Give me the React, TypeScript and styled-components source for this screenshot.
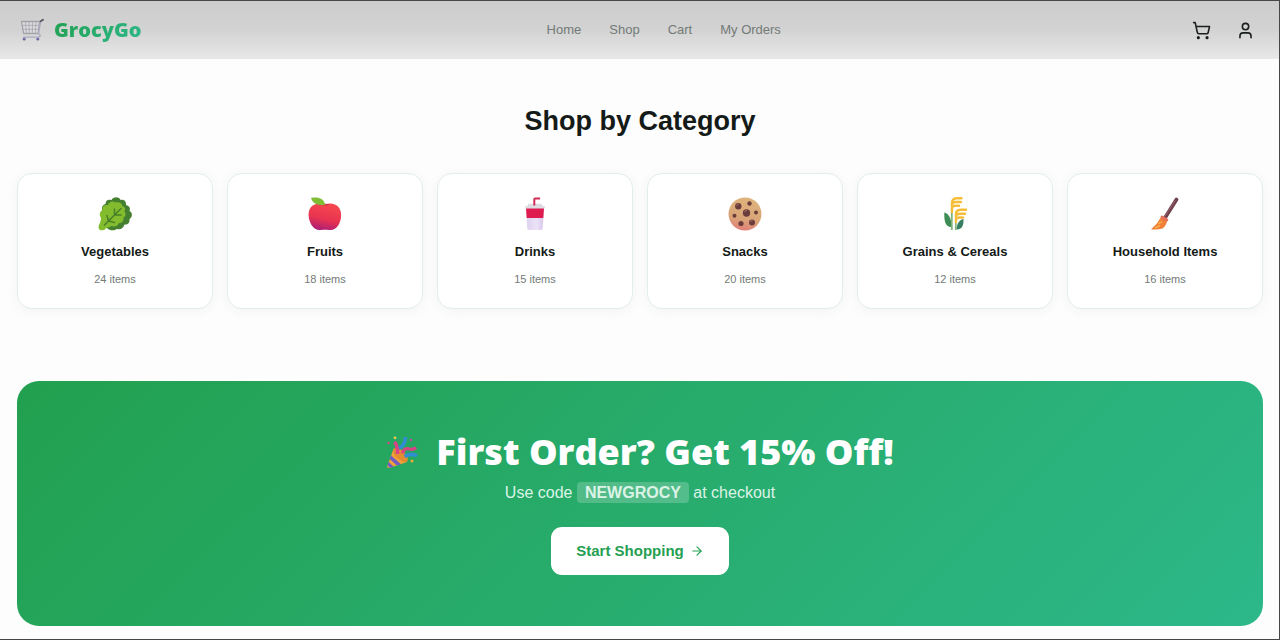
import React from "react";
import styled, { createGlobalStyle } from "styled-components";
import { ArrowRight, ShoppingCart, User } from "lucide-react";

const sans = '"Liberation Sans", Arial, sans-serif';
const display = '"Open Sans", "Liberation Sans", sans-serif';

const GlobalStyle = createGlobalStyle`
  *, *::before, *::after { box-sizing: border-box; }
  body {
    margin: 0;
    background: #fdfdfd;
    color: #141a17;
    font-family: ${sans};
  }
  h1, h2, h3, p { margin: 0; }
`;

const Page = styled.div`
  min-height: 100vh;
  border: solid #47474a;
  border-width: 1px 1px 1px 0;
  padding-bottom: 13px;
`;

const Header = styled.header`
  display: flex;
  align-items: center;
  justify-content: space-between;
  height: 58px;
  padding: 0 17px;
  background: linear-gradient(#cbcccb, #d2d3d2 50%, #e8e8e8);
`;

const Brand = styled.a`
  display: flex;
  align-items: center;
  gap: 10px;
  padding-left: 3px;
  font: 800 20px/24px ${display};
  text-decoration: none;
`;

const BrandName = styled.span`
  background: linear-gradient(135deg, #22a04f, #2db88a);
  background-clip: text;
  -webkit-background-clip: text;
  color: transparent;
`;

const Nav = styled.nav`
  display: flex;
  gap: 28px;
`;

const NavLink = styled.a`
  color: #737a77;
  font-size: 13px;
  line-height: 20px;
  text-decoration: none;
`;

const Actions = styled.div`
  display: flex;
  gap: 12px;
`;

const IconButton = styled.button`
  display: grid;
  place-items: center;
  width: 32px;
  height: 32px;
  padding: 0;
  border: 0;
  border-radius: 8px;
  background: none;
  color: #1b1f1d;
  cursor: pointer;
`;

const Section = styled.section`
  padding: 45px 16px 0 17px;
`;

const SectionTitle = styled.h2`
  margin-bottom: 35px;
  font-size: 27px;
  font-weight: 700;
  line-height: 34px;
  text-align: center;
`;

const CategoryGrid = styled.div`
  display: grid;
  grid-template-columns: repeat(6, 1fr);
  gap: 14px;
`;

const Card = styled.a`
  display: flex;
  flex-direction: column;
  align-items: center;
  padding: 22px 8px 20px;
  border: 1px solid #e2eeea;
  border-radius: 15px;
  background: #fff;
  box-shadow: 0 2px 12px rgba(20, 60, 40, 0.05);
  color: inherit;
  text-decoration: none;
`;

const CardTitle = styled.h3`
  margin: 10px 0 8px;
  font-size: 13px;
  font-weight: 700;
  line-height: 20px;
`;

const CardCount = styled.p`
  color: #737a77;
  font-size: 11px;
  line-height: 18px;
`;

const Banner = styled.section`
  display: flex;
  flex-direction: column;
  align-items: center;
  margin: 72px 16px 0 17px;
  padding: 49px 24px 51px;
  border-radius: 22px;
  background: linear-gradient(135deg, #22a04f, #2db88a);
  color: #fff;
`;

const BannerTitle = styled.h2`
  display: flex;
  align-items: center;
  gap: 16px;
  font: 800 36px/44px ${display};
`;

const BannerText = styled.p`
  margin: 7px 0 22px;
  color: #dcf3e7;
  font-size: 16px;
  line-height: 24px;
`;

const Code = styled.strong`
  padding: 2px 8px;
  border-radius: 4px;
  background: rgba(255, 255, 255, 0.2);
`;

const StartButton = styled.button`
  display: flex;
  align-items: center;
  gap: 6px;
  height: 48px;
  padding: 0 25px;
  border: 0;
  border-radius: 11px;
  background: #fff;
  color: #25a052;
  font: 700 15px/20px ${sans};
  cursor: pointer;
`;

const TrolleyArt = () => (
  <svg width="24" height="24" viewBox="0 0 24 24" fill="none" aria-hidden="true">
    <path d="M1.500 3.500h18l-1.400 12H3.600z" fill="#dcdce0" stroke="#a3a2a8" strokeWidth="1.300" strokeLinejoin="round" />
    <path d="M5.500 3.800l.8 11.400M9 3.800l.3 11.400M12.500 3.800l-.2 11.400M16 3.800l-.8 11.400M2 7.300h17M2.600 11.300h16" stroke="#aaa9b0" strokeWidth="0.900" />
    <path d="M20.800 2.600L18.400 15.500l2 2-1.400 1.600H3.200" stroke="#aaa9c0" strokeWidth="1.400" strokeLinejoin="round" />
    <path d="M20.600 3.200l2.400-1.400" stroke="#5b5660" strokeWidth="1.800" strokeLinecap="round" />
    <circle cx="4.200" cy="21.200" r="1.400" fill="#6c6aa6" />
    <circle cx="17.800" cy="21.200" r="1.400" fill="#6c6aa6" />
  </svg>
);

const LeafArt = () => (
  <svg width="36" height="36" viewBox="0 0 36 36" fill="none" aria-hidden="true">
    <path d="M5 14c-.5-3.500 1-5.500 3.500-6C8.500 4.500 11 3 14.500 4c2-4 8-3.500 9 0 3.500-1 6 1.500 5.500 5 4 1 4.500 3.500 3.500 6 3.500 2 3 6 0 8 .5 4-2 6-5 5.500-1 3.500-4 5.500-7.500 4.500-3 2-7.500 1.500-9.500-.5L5 28z" fill="#44802f" />
    <path d="M4 22c-2-3-1.500-6.500 1.500-8C5 10.500 8 8.500 11 9c1-3.500 5-4.500 7.500-2.500 3.500-1 6.500.5 6.800 3.500 3 1 3.500 3.500 2 5.500 2 2.500 1.500 5-.8 6 .6 3.500-1.500 5.500-4.500 5.500-1.500 3.500-5 4-7.500 3-2.500 2-5 1-6.500 3.500-2 1.500-6.500 1-6.500-2 0-3 2.500-5 2.500-9.500z" fill="#83bd2e" />
    <path d="M7.500 29L24 12.500M17.500 19v-6M17.500 19h6.500M11.500 25l-1.500-5.500M11.500 25l6 1.500" stroke="#477f27" strokeWidth="1.500" strokeLinecap="round" />
  </svg>
);

const AppleArt = () => (
  <svg width="36" height="36" viewBox="0 0 36 36" fill="none" aria-hidden="true">
    <defs>
      <linearGradient id="appleSkin" x1="22" y1="7" x2="16" y2="34" gradientUnits="userSpaceOnUse">
        <stop stopColor="#f64a4f" />
        <stop offset="0.6" stopColor="#e93350" />
        <stop offset="1" stopColor="#b01f72" />
      </linearGradient>
    </defs>
    <path d="M18 8.500C13 6.500 7 7.500 4 11c-4 5-2.500 13 .5 18 2.500 4 5.500 5.500 9.500 5 2.500-.4 5.500-.4 8 0 4 .5 7-1 9.500-5 3-5 4-13 0-18-3-3.500-8.500-4.500-13.500-2.500z" fill="url(#appleSkin)" />
    <path d="M13 8.600q5-1.500 10 0-5 2-10 0z" fill="#cf2d45" />
    <path d="M4 2c7-1.500 13 .5 14.300 7C12 9.500 6 8.500 4 2z" fill="#80bd35" />
  </svg>
);

const CupArt = () => (
  <svg width="36" height="36" viewBox="0 0 36 36" fill="none" aria-hidden="true">
    <defs>
      <linearGradient id="cupBody" x1="9" y1="0" x2="27" y2="0" gradientUnits="userSpaceOnUse">
        <stop stopColor="#ddd2ee" />
        <stop offset="0.6" stopColor="#ebe2f7" />
        <stop offset="1" stopColor="#d5c4e8" />
      </linearGradient>
    </defs>
    <path d="M9 12h18l-1.400 20.500q-.1 1.500-1.700 1.500H12q-1.600 0-1.700-1.500z" fill="url(#cupBody)" />
    <path d="M9 12h18l-.7 10H9.700z" fill="#df1c50" />
    <path d="M11.500 7.800h13l1.200 2.200h1.300q.8 0 .8 1v1.500H8.200V11q0-1 .8-1h1.300z" fill="#dedbe2" />
    <path d="M17.300 9.500V3.300q0-.8.800-.8h5" stroke="#d32c58" strokeWidth="2" />
  </svg>
);

const CookieArt = () => (
  <svg width="36" height="36" viewBox="0 0 36 36" fill="none" aria-hidden="true">
    <defs>
      <linearGradient id="cookieDough" x1="21" y1="2" x2="15" y2="34" gradientUnits="userSpaceOnUse">
        <stop stopColor="#dfb47d" />
        <stop offset="0.65" stopColor="#d9a477" />
        <stop offset="1" stopColor="#e28078" />
      </linearGradient>
    </defs>
    <circle cx="18" cy="18" r="16.500" fill="url(#cookieDough)" />
    <g fill="#6b3c3c">
      <circle cx="11.300" cy="10.300" r="3.200" />
      <circle cx="22.500" cy="7.500" r="2.200" />
      <circle cx="19.500" cy="17" r="3.700" />
      <circle cx="29" cy="16.500" r="2" />
      <circle cx="7.500" cy="19.800" r="2" />
      <circle cx="14" cy="27.500" r="2.600" />
      <circle cx="25" cy="26.500" r="3" />
    </g>
    <path d="M9.500 9.500l2-1.500M17.500 15.500l2.500-1.500M23.500 25.300l2-1" stroke="#a66a5c" strokeWidth="1" strokeLinecap="round" />
  </svg>
);

const GrainArt = () => (
  <svg width="36" height="36" viewBox="0 0 36 36" fill="none" aria-hidden="true">
    <path d="M14.800 34V12" stroke="#82b578" strokeWidth="1.800" />
    <path d="M18.800 34V23" stroke="#82b578" strokeWidth="1.600" />
    <path d="M14 31C9 30.500 7 27 7.300 16.500c4 1 6.200 5 6.700 9z" fill="#3d8b55" />
    <path d="M19.500 33.500c5.500 0 7.200-4 7-10.500-4.500 1-6.500 4.500-7 10.500z" fill="#367e60" />
    <g stroke="#f5bd38" strokeWidth="2.400" strokeLinecap="round">
      <path d="M15 16V7q0-4.500 4.500-4.800h5M15.500 7.300q1-1.300 3-1.300h5.500M15.500 11q1-1.200 2.500-1.200h4" />
      <path d="M19 26v-8q0-4 4.500-4.200h5.500M19.500 19q1-1.300 3-1.300h5.500M19.500 22.700q1-1.200 2.500-1.200h4" />
    </g>
  </svg>
);

const BroomArt = () => (
  <svg width="36" height="36" viewBox="0 0 36 36" fill="none" aria-hidden="true">
    <path d="M18.500 21L29.500 3.600" stroke="#70404d" strokeWidth="3.800" strokeLinecap="round" />
    <path d="M28.300 4.500L17.800 20.500" stroke="#9b6873" strokeWidth="0.900" />
    <path d="M13.500 22q3-2 6.800.700-.2 6.500-4.800 9.800-5 1.500-11.500.8Q10 28.500 13.500 22z" fill="#ef8138" />
    <path d="M11 27.500l4-1.500M8 32l5-2.500" stroke="#f8ad4a" strokeWidth="1.500" />
    <path d="M15 21l4.800 3" stroke="#e2705a" strokeWidth="3" strokeLinecap="round" />
  </svg>
);

const PartyArt = () => (
  <svg width="34" height="34" viewBox="0 0 34 34" fill="none" aria-hidden="true">
    <path d="M7.500 14L1.300 31q-.5 2.500 2 2L21 27z" fill="#f0a13a" />
    <path d="M5 20.500L15 29.200l-4 1.400-7.300-6.500zM2.700 27l5 4.700-3.800 1.300-2.400-3z" fill="#6f5cc6" />
    <ellipse cx="14.500" cy="20" rx="9.300" ry="4.600" transform="rotate(43 14.500 20)" fill="#e58c31" />
    <path d="M11.500 19Q12 11 8.500 7" stroke="#d94385" strokeWidth="3.600" />
    <path d="M13 13Q19 11 19.500 2" stroke="#328ed3" strokeWidth="3.600" />
    <path d="M16.500 18.500q1-6 7-4.500 4 1 6.500-1.500" stroke="#d94385" strokeWidth="3.200" />
    <path d="M18.500 21.500q7-4 12.500-.5" stroke="#328ed3" strokeWidth="3.600" />
    <circle cx="9" cy="2.800" r="1.400" fill="#efc94b" />
    <circle cx="2.500" cy="8" r="1.200" fill="#d94385" />
    <circle cx="25" cy="5" r="1.300" fill="#b94da0" />
    <circle cx="26" cy="26" r="1.500" fill="#efa93b" />
  </svg>
);

const categories = [
  { name: "Vegetables", count: 24, Art: LeafArt },
  { name: "Fruits", count: 18, Art: AppleArt },
  { name: "Drinks", count: 15, Art: CupArt },
  { name: "Snacks", count: 20, Art: CookieArt },
  { name: "Grains & Cereals", count: 12, Art: GrainArt },
  { name: "Household Items", count: 16, Art: BroomArt },
];

export default function App() {
  return (
    <Page>
      <GlobalStyle />
      <Header>
        <Brand href="#home">
          <TrolleyArt />
          <BrandName>GrocyGo</BrandName>
        </Brand>
        <Nav aria-label="Main">
          {["Home", "Shop", "Cart", "My Orders"].map((label) => (
            <NavLink key={label} href={`#${label.toLowerCase().replace(" ", "-")}`}>
              {label}
            </NavLink>
          ))}
        </Nav>
        <Actions>
          <IconButton type="button" aria-label="Open cart">
            <ShoppingCart size={19} />
          </IconButton>
          <IconButton type="button" aria-label="Account">
            <User size={19} />
          </IconButton>
        </Actions>
      </Header>
      <main>
        <Section>
          <SectionTitle>Shop by Category</SectionTitle>
          <CategoryGrid>
            {categories.map(({ name, count, Art }) => (
              <Card key={name} href="#shop">
                <Art />
                <CardTitle>{name}</CardTitle>
                <CardCount>{`${count} items`}</CardCount>
              </Card>
            ))}
          </CategoryGrid>
        </Section>
        <Banner>
          <BannerTitle>
            <PartyArt />
            <span>First Order? Get 15% Off!</span>
          </BannerTitle>
          <BannerText>
            Use code <Code>NEWGROCY</Code> at checkout
          </BannerText>
          <StartButton type="button">
            Start Shopping
            <ArrowRight size={14} />
          </StartButton>
        </Banner>
      </main>
    </Page>
  );
}
